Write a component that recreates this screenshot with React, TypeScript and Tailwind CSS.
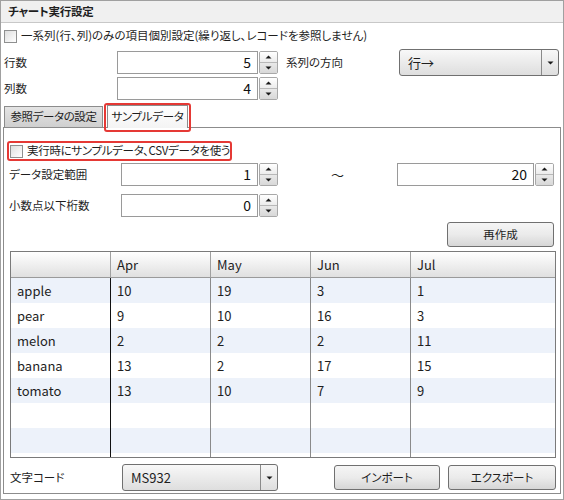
import React from "react";

const data = [
  ["apple", "10", "19", "3", "1"],
  ["pear", "9", "10", "16", "3"],
  ["melon", "2", "2", "2", "11"],
  ["banana", "13", "2", "17", "15"],
  ["tomato", "13", "10", "7", "9"],
  ["", "", "", "", ""],
  ["", "", "", "", ""],
];

function Tri({ down }: { down?: boolean }) {
  return (
    <svg width="7" height="4" viewBox="0 0 7 4" className="block">
      <path d={down ? "M0.5 0.5h6L3.5 3.5z" : "M0.5 3.5h6L3.5 0.5z"} fill="#1a1a1a" />
    </svg>
  );
}

function Check() {
  return <div className="h-[13px] w-[13px] shrink-0 border border-[#8e8f8f] bg-gradient-to-br from-[#dedede] to-white" />;
}

function NumberBox({ value, className }: { value: string; className: string }) {
  return (
    <div className={`flex h-[23px] ${className}`}>
      <div className="flex flex-1 items-center justify-end border border-[#9a9a9a] bg-white pr-[6px] text-[14px] text-[#111]">
        {value}
      </div>
      <div className="ml-[1px] flex w-[19px] flex-col overflow-hidden rounded-[2px] border border-[#a8a8a8]">
        <div className="flex flex-1 items-center justify-center border-b border-[#b8b8b8] bg-gradient-to-b from-white to-[#ececec]">
          <Tri />
        </div>
        <div className="flex flex-1 items-center justify-center bg-gradient-to-b from-[#e9e9e9] to-[#d8d8d8]">
          <Tri down />
        </div>
      </div>
    </div>
  );
}

function Select({ value, className }: { value: string; className: string }) {
  return (
    <div className={`flex h-[27px] rounded-[3px] border border-[#707070] bg-gradient-to-b from-[#f8f8f8] to-[#dedede] ${className}`}>
      <div className="flex flex-1 items-center pl-[8px] text-[13px]">{value}</div>
      <div className="flex w-[17px] items-center justify-center border-l border-[#8a8a8a]">
        <Tri down />
      </div>
    </div>
  );
}

function Btn({ label, className }: { label: string; className: string }) {
  return (
    <div className={`flex items-center justify-center rounded-[3px] border border-[#707070] bg-gradient-to-b from-[#f5f5f5] via-[#ebebeb] to-[#d6d6d6] ${className}`}>
      {label}
    </div>
  );
}

export default function App() {
  return (
    <div className="flex h-[500px] w-[564px] flex-col whitespace-nowrap border border-[#a0a0a0] bg-white font-['Noto_Sans_CJK_JP',sans-serif] text-[11.5px] text-[#1e1e1e] [font-feature-settings:'palt']">
      {/* Title */}
      <div className="flex h-[22px] shrink-0 items-center border-b border-[#c8c8c8] bg-[#f0f0f0] pl-[7px] font-bold tracking-[-0.2px]">
        チャート実行設定
      </div>

      <div className="flex flex-1 flex-col px-[2px] pb-[5px]">
        <div className="flex h-[26px] items-center pl-[1px]">
          <Check />
          <span className="ml-[4px]">一系列(行、列)のみの項目個別設定(繰り返し、レコードを参照しません)</span>
        </div>

        <div className="flex h-[27px] items-center pl-[1px]">
          <div className="w-[113px]">行数</div>
          <NumberBox value="5" className="w-[161px]" />
          <div className="ml-[8px] w-[113px]">系列の方向</div>
          <Select value="行→" className="w-[160px]" />
        </div>

        <div className="flex h-[25px] items-center pl-[1px]">
          <div className="w-[113px]">列数</div>
          <NumberBox value="4" className="w-[161px]" />
        </div>

        {/* Tabs */}
        <div className="mt-[3px] flex h-[23px] items-end pl-[1px]">
          <div className="-mb-px flex h-[22px] w-[99px] items-center justify-center border border-[#8c8c8c] bg-gradient-to-b from-[#e4e4e4] to-[#cfcfcf] tracking-[-0.4px]">
            参照データの設定
          </div>
          <div className="relative -mb-px ml-[4px] flex h-[23px] w-[81px] items-center justify-center border border-b-0 border-[#8c8c8c] bg-gradient-to-b from-white to-[#f4f4f4] tracking-[-0.3px]">
            サンプルデータ
            <div className="absolute -top-[3px] -right-[4px] -bottom-[4px] -left-[4px] rounded-[3px] border-2 border-[#e53935]" />
          </div>
        </div>

        {/* Panel */}
        <div className="flex flex-1 flex-col border border-[#8c8c8c]">
          <div className="ml-[3px] mt-[13px] flex h-[20px] w-[225px] items-center overflow-hidden rounded-[3px] border-2 border-[#e53935] pl-[1px]">
            <Check />
            <span className="ml-[4px] tracking-[-0.3px]">実行時にサンプルデータ、CSVデータを使う</span>
          </div>

          <div className="mt-[2px] flex h-[23px] items-center">
            <div className="w-[117px] pl-[5px]">データ設定範囲</div>
            <NumberBox value="1" className="w-[157px]" />
            <div className="w-[119px] text-center text-[13px]">～</div>
            <NumberBox value="20" className="w-[157px]" />
          </div>

          <div className="mt-[8px] flex h-[23px] items-center">
            <div className="w-[117px] pl-[5px]">小数点以下桁数</div>
            <NumberBox value="0" className="w-[157px]" />
          </div>

          <div className="mt-[5px] flex justify-end pr-[6px]">
            <Btn label="再作成" className="h-[25px] w-[107px]" />
          </div>

          {/* Table */}
          <div className="ml-[6px] mr-[4px] mt-[4px] flex h-[207px] flex-col border border-[#7a7a7a] text-[13px]">
            <div className="flex h-[26px] shrink-0 border-b border-[#9a9a9a] bg-gradient-to-b from-white to-[#e0e0e0]">
              <div className="w-[100px] border-r border-[#a0a0a0]" />
              {["Apr", "May", "Jun"].map((m) => (
                <div key={m} className="flex w-[100px] items-center border-r border-[#a0a0a0] pl-[6px]">
                  {m}
                </div>
              ))}
              <div className="flex flex-1 items-center pl-[6px]">Jul</div>
            </div>
            {data.map((r, i) => (
              <div key={i} className={`flex h-[25px] shrink-0 ${i % 2 === 0 ? "bg-[#edf2fa]" : "bg-white"}`}>
                <div className="flex w-[100px] items-center border-r border-[#111] pl-[6px]">{r[0]}</div>
                <div className="flex w-[100px] items-center border-r border-[#8a8a8a] pl-[6px]">{r[1]}</div>
                <div className="flex w-[100px] items-center border-r border-[#8a8a8a] pl-[6px]">{r[2]}</div>
                <div className="flex w-[100px] items-center border-r border-[#8a8a8a] pl-[6px]">{r[3]}</div>
                <div className="flex flex-1 items-center pl-[6px]">{r[4]}</div>
              </div>
            ))}
            <div className="flex flex-1">
              <div className="w-[100px] border-r border-[#111]" />
              <div className="w-[100px] border-r border-[#8a8a8a]" />
              <div className="w-[100px] border-r border-[#8a8a8a]" />
              <div className="w-[100px] border-r border-[#8a8a8a]" />
              <div className="flex-1" />
            </div>
          </div>

          <div className="mt-[6px] flex h-[27px] items-center">
            <div className="w-[118px] pl-[6px]">文字コード</div>
            <Select value="MS932" className="w-[156px]" />
            <Btn label="インポート" className="ml-auto h-[25px] w-[106px]" />
            <Btn label="エクスポート" className="ml-[8px] mr-[4px] h-[25px] w-[108px]" />
          </div>
        </div>
      </div>
    </div>
  );
}
